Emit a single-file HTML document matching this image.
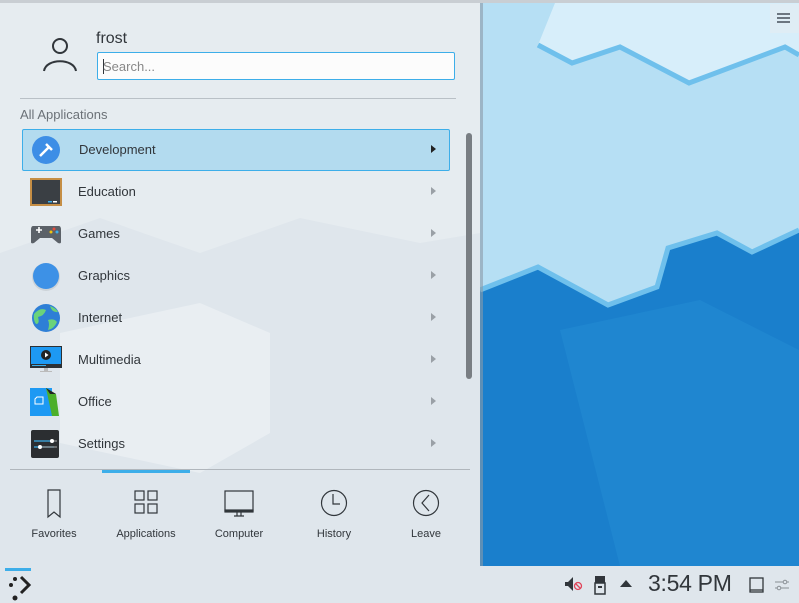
<!DOCTYPE html>
<html><head><meta charset="utf-8"><style>
*{margin:0;padding:0;box-sizing:border-box}
body{width:799px;height:603px;overflow:hidden;position:relative;background:#dde5ec;font-family:"Liberation Sans",sans-serif;color:#31363b}
.abs{position:absolute}
.row{position:absolute;left:22px;width:428px;height:42px}
.row .t{position:absolute;left:56px;top:13px;font-size:13px}
.row .a{position:absolute;left:409px;top:16px;width:0;height:0;border-left:5px solid #9aa0a6;border-top:4px solid transparent;border-bottom:4px solid transparent}
.row .ic{position:absolute;left:8px;top:5px;width:32px;height:32px}
.tab{position:absolute;top:488px;width:92px;text-align:center;font-size:11px}
.tab svg{display:block;margin:0 auto 8px}
</style></head><body>
<svg class="abs" style="left:480px;top:0" width="319" height="566" viewBox="480 0 319 566">
<rect x="480" y="0" width="319" height="566" fill="#b6dff4"/>
<polygon points="555,3 799,3 799,55 785,47 689,83 620,47 572,63 538,45" fill="#d7eefa"/>
<polyline points="538,45 572,63 620,47 689,83 785,47 799,55" fill="none" stroke="#6fc0ec" stroke-width="5"/>
<polygon points="480,290 538,267 608,305 657,287 668,248 717,233 752,252 799,230 799,566 480,566" fill="#1a7fcc"/>
<polygon points="560,330 700,300 799,350 799,566 620,566" fill="#2b97dc" opacity=".3"/>
<polyline points="480,290 538,267 608,305 657,287 668,248 717,233 752,252 799,230" fill="none" stroke="#6fc0ec" stroke-width="5"/>
<rect x="480" y="3" width="3" height="563" fill="#8a9aa6" opacity=".6"/>
<rect x="770" y="4" width="29" height="29" fill="#e3ecf2" opacity=".7"/>
<rect x="777" y="13" width="13" height="2" fill="#6c7680"/><rect x="777" y="17" width="13" height="2" fill="#6c7680"/><rect x="777" y="21" width="13" height="2" fill="#6c7680"/>
</svg>
<div class="abs" style="left:0;top:0;width:799px;height:3px;background:#c9ced3"></div>
<div class="abs" style="left:0;top:3px;width:480px;height:563px;background:#e6ecf0"></div>
<svg class="abs" style="left:0;top:3px" width="480" height="563"><polygon points="0,250 100,215 200,250 300,215 420,240 480,230 480,563 0,563" fill="#dfe6ec"/><polygon points="60,330 200,300 270,330 270,430 200,470 60,440" fill="#e9eef2"/></svg>
<svg class="abs" style="left:40px;top:36px" width="40" height="40" fill="none" stroke="#31363b" stroke-width="2"><circle cx="20" cy="10" r="7"/><path d="M4 35 C6 22 34 22 36 35"/></svg>
<div class="abs" style="left:96px;top:30px;font-size:16px">frost</div>
<div class="abs" style="left:97px;top:52px;width:358px;height:28px;background:#fcfcfc;border:1px solid #3daee9;border-radius:2px"><div class="abs" style="left:5px;top:6px;width:1px;height:15px;background:#31363b"></div><span class="abs" style="left:5px;top:6px;font-size:13px;color:#888">Search...</span></div>
<div class="abs" style="left:20px;top:98px;width:436px;height:1px;background:#b9c0c6"></div>
<div class="abs" style="left:20px;top:107px;font-size:13px;color:#6b7177">All Applications</div>
<div class="abs" style="left:466px;top:133px;width:6px;height:246px;background:#797e83;border-radius:3px"></div>
<div class="row" style="top:129px;background:#b3dbef;border:1px solid #3daee9;border-radius:2px"><svg class="ic" style="left:7px;top:4px" viewBox="0 0 32 32"><circle cx="16" cy="16" r="14" fill="#3d8ee6"/><path d="M10 22 L19 13 M16 10 L22 16" stroke="#fff" stroke-width="2.5"/></svg><span class="t" style="top:12px">Development</span><div class="a" style="border-left-color:#222;top:15px;left:408px"></div></div>
<div class="row" style="top:171px"><svg class="ic" viewBox="0 0 32 32"><rect x="0" y="2" width="32" height="28" fill="#c58e45"/><rect x="2" y="4" width="28" height="24" fill="#3a3f44"/><rect x="18" y="25" width="4" height="1.5" fill="#3daee9"/><rect x="23" y="25" width="4" height="1.5" fill="#fff"/></svg><span class="t">Education</span><div class="a"></div></div>
<div class="row" style="top:213px"><svg class="ic" viewBox="0 0 32 32"><path d="M3 8 H29 Q31 8 31 12 V24 Q31 26 28 25 L22 20 H10 L4 25 Q1 26 1 24 V12 Q1 8 3 8Z" fill="#5b6168"/><path d="M6 12 h6 M9 9 v6" stroke="#fff" stroke-width="1.6"/><circle cx="24" cy="11" r="1.5" fill="#e74c3c"/><circle cx="21" cy="14" r="1.5" fill="#f1c40f"/><circle cx="27" cy="14" r="1.5" fill="#3daee9"/></svg><span class="t">Games</span><div class="a"></div></div>
<div class="row" style="top:255px"><svg class="ic" viewBox="0 0 32 32"><circle cx="16" cy="17" r="14" fill="#ccd3d8"/><circle cx="16" cy="16" r="13" fill="#3d91e6"/></svg><span class="t">Graphics</span><div class="a"></div></div>
<div class="row" style="top:297px"><svg class="ic" viewBox="0 0 32 32"><circle cx="16" cy="16" r="14" fill="#2e7fd6"/><path d="M4 12 Q10 5 16 8 Q14 14 8 15 Q10 22 6 22 Q3 18 4 12Z M18 18 Q24 16 27 20 Q24 27 18 28 Q20 22 18 18Z M20 4 Q26 6 28 10 Q22 11 20 4Z" fill="#6bd37a"/></svg><span class="t">Internet</span><div class="a"></div></div>
<div class="row" style="top:339px"><svg class="ic" viewBox="0 0 32 32"><rect x="0" y="2" width="32" height="22" fill="#2c3034"/><rect x="1" y="3" width="30" height="17" fill="#1d99f3"/><circle cx="16" cy="11" r="5" fill="#222"/><path d="M15 8.5 L18.5 11 L15 13.5Z" fill="#fff"/><rect x="2" y="21" width="14" height="1" fill="#3daee9"/><rect x="14" y="24" width="4" height="3" fill="#bbb"/><rect x="10" y="27" width="12" height="1" fill="#bbb"/></svg><span class="t">Multimedia</span><div class="a"></div></div>
<div class="row" style="top:381px"><svg class="ic" viewBox="0 0 32 32"><rect x="0" y="2" width="22" height="28" fill="#1d99f3"/><polygon points="16,2 26,8 29,30 22,30" fill="#4caf2a"/><polygon points="16,2 26,8 20,8" fill="#222"/><path d="M7 11 h6 v7 h-8 v-5z" fill="none" stroke="#fff" stroke-width="1"/></svg><span class="t">Office</span><div class="a"></div></div>
<div class="row" style="top:423px"><svg class="ic" viewBox="0 0 32 32"><rect x="1" y="2" width="28" height="28" rx="2" fill="#2b2e31"/><path d="M4 13 H22 M4 19 H24" stroke="#3daee9" stroke-width="1.2"/><path d="M22 13 H27 M12 19 H27" stroke="#aaa" stroke-width="1"/><circle cx="22" cy="13" r="2" fill="#fff"/><circle cx="10" cy="19" r="2" fill="#fff"/></svg><span class="t">Settings</span><div class="a"></div></div>
<div class="abs" style="left:10px;top:469px;width:460px;height:1px;background:#b0b6bc"></div>
<div class="abs" style="left:102px;top:470px;width:88px;height:3px;background:#3daee9"></div>
<div class="tab" style="left:8px"><svg width="32" height="32" fill="none" stroke="#31363b" stroke-width="1.2"><path d="M10 2 H22 V29 L16 24 L10 29Z"/></svg>Favorites</div>
<div class="tab" style="left:100px"><svg width="32" height="32" fill="none" stroke="#31363b" stroke-width="1.2"><rect x="5" y="3" width="9" height="9"/><rect x="18" y="3" width="9" height="9"/><rect x="5" y="16" width="9" height="9"/><rect x="18" y="16" width="9" height="9"/></svg>Applications</div>
<div class="tab" style="left:193px"><svg width="32" height="32" fill="none" stroke="#31363b" stroke-width="1.2"><rect x="2" y="3" width="28" height="20"/><rect x="2" y="22" width="28" height="2" fill="#31363b"/><path d="M14 24 v4 M18 24 v4 M11 28 h10"/></svg>Computer</div>
<div class="tab" style="left:288px"><svg width="32" height="32" fill="none" stroke="#31363b" stroke-width="1.2"><circle cx="16" cy="15" r="12.5"/><path d="M15 6 V16 H22"/></svg>History</div>
<div class="tab" style="left:380px"><svg width="32" height="32" fill="none" stroke="#31363b" stroke-width="1.2"><circle cx="16" cy="15" r="12.5"/><path d="M19 7 L12 15 L19 23"/></svg>Leave</div>
<div class="abs" style="left:0;top:566px;width:799px;height:37px;background:#dfe6ec"></div>
<div class="abs" style="left:5px;top:568px;width:26px;height:3px;background:#3daee9"></div>
<svg class="abs" style="left:5px;top:572px" width="28" height="30"><circle cx="10" cy="7" r="2" fill="#222"/><circle cx="6" cy="13" r="2" fill="#222"/><circle cx="10" cy="26" r="2.5" fill="#222"/><path d="M16 5 L24 13 L16 21" fill="none" stroke="#222" stroke-width="3"/></svg>
<svg class="abs" style="left:564px;top:575px" width="20" height="18"><path d="M1 7 h3 l5 -5 v14 l-5 -5 h-3z" fill="#31363b"/><circle cx="14" cy="11" r="3.5" fill="none" stroke="#e0455a" stroke-width="1.3"/><path d="M11.5 8.5 L16.5 13.5" stroke="#e0455a" stroke-width="1.3"/></svg>
<svg class="abs" style="left:594px;top:575px" width="12" height="20"><rect x="1" y="1" width="10" height="7" fill="#31363b"/><rect x="1" y="8" width="10" height="11" fill="none" stroke="#31363b" stroke-width="1.5"/><rect x="4" y="11" width="4" height="2" fill="#31363b"/></svg>
<div class="abs" style="left:620px;top:580px;width:0;height:0;border-bottom:7px solid #31363b;border-left:6px solid transparent;border-right:6px solid transparent"></div>
<div class="abs" style="left:648px;top:570px;font-size:23px;color:#31363b;letter-spacing:-0.3px">3:54 PM</div>
<svg class="abs" style="left:748px;top:576px" width="18" height="18" fill="none" stroke="#31363b" stroke-width="1.3"><rect x="2" y="2" width="13" height="14"/><path d="M2 14 h13"/></svg>
<svg class="abs" style="left:774px;top:577px" width="16" height="16" stroke="#8a9095" stroke-width="1" fill="none"><path d="M1 5 h14 M1 11 h14"/><circle cx="11" cy="5" r="1.8" fill="#dfe6ec"/><circle cx="5" cy="11" r="1.8" fill="#dfe6ec"/></svg>
</body></html>
